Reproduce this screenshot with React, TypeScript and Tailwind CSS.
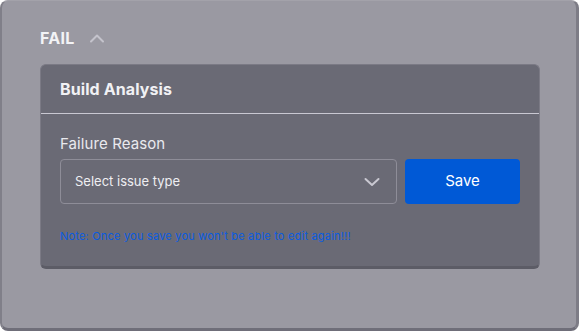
import React from 'react';

const ChevronUp = () => (
  <svg width="16" height="10" viewBox="0 0 16 10" fill="none">
    <path d="M2 8.5L8 2.5L14 8.5" stroke="#c4c3cc" strokeWidth="2" strokeLinecap="round" strokeLinejoin="round" />
  </svg>
);

const ChevronDown = () => (
  <svg width="16" height="10" viewBox="0 0 16 10" fill="none">
    <path d="M1.5 2L8 8L14.5 2" stroke="#c9c8d1" strokeWidth="2" strokeLinecap="round" strokeLinejoin="round" />
  </svg>
);

export default function App() {
  return (
    <div className="w-[580px] h-[332px] bg-white" style={{ fontFamily: 'Inter, "Open Sans", sans-serif' }}>
      <div className="w-[579px] h-[331px] bg-[#9a99a2] rounded-lg border-t border-l-2 border-r-[3px] border-b-[3px] border-t-[#a3a2aa] border-l-[#807f89] border-r-[#7d7c86] border-b-[#6f6e79] pl-[38px] pr-[37px] pt-[25px]">
        {/* Header toggle */}
        <div className="flex items-center gap-[14px] h-[24px]">
          <span className="text-[16px] font-bold text-[#f3f3f6] tracking-[0.3px]">FAIL</span>
          <ChevronUp />
        </div>

        {/* Build analysis card */}
        <div className="mt-[14px] w-[500px] h-[205px] bg-[#6a6a75] rounded-md border border-[#7b7a85] border-b-[3px] border-b-[#5c5c66] overflow-hidden">
          <div className="h-[49px] flex items-center px-[19px] border-b border-[#c9c8d2]">
            <h2 className="text-[16px] font-bold text-[#f1f1f4] tracking-[0.1px]">Build Analysis</h2>
          </div>

          <div className="px-[19px] pt-[20px]">
            <label className="block text-[15px] text-[#e9e9ee] leading-[20px] tracking-[0.1px]">Failure Reason</label>
            <div className="mt-[5px] flex gap-[8px]">
              <div className="w-[337px] h-[45px] rounded border border-[#8e8d98] flex items-center justify-between pl-[14px] pr-[16px]">
                <span className="text-[13px] text-[#eeeef2]">Select issue type</span>
                <ChevronDown />
              </div>
              <button className="w-[115px] h-[45px] rounded bg-[#0059d6] text-white text-[15px]">Save</button>
            </div>
            <p className="mt-[25px] text-[11px] leading-[14px] text-[#0a5ce0] tracking-[0.2px]">Note: Once you save you won't be able to edit again!!!</p>
          </div>
        </div>
      </div>
    </div>
  );
}
